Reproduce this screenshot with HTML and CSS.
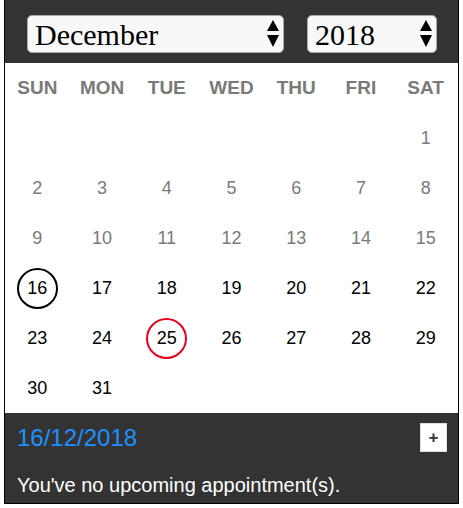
FILE: index.html
```html
<!DOCTYPE html>
<html>
<head>
<meta charset="utf-8">
<link rel="stylesheet" href="styles.css">
</head>
<body>
<div class="cal">
  <div class="cal-head">
    <div class="sel sel-month">
      <select class="sel-input"><option>December</option></select>
      <svg class="sel-arrows" width="12" height="27" viewBox="0 0 12 27"><polygon points="6,0 12,11 0,11" fill="#000"/><polygon points="0,15 12,15 6,27" fill="#000"/></svg>
    </div>
    <div class="sel sel-year">
      <select class="sel-input"><option>2018</option></select>
      <svg class="sel-arrows" width="12" height="27" viewBox="0 0 12 27"><polygon points="6,0 12,11 0,11" fill="#000"/><polygon points="0,15 12,15 6,27" fill="#000"/></svg>
    </div>
  </div>
  <div class="grid">
    <div class="wd">SUN</div><div class="wd">MON</div><div class="wd">TUE</div><div class="wd">WED</div><div class="wd">THU</div><div class="wd">FRI</div><div class="wd">SAT</div>
    <div class="d"></div><div class="d"></div><div class="d"></div><div class="d"></div><div class="d"></div><div class="d"></div><div class="d past">1</div>
    <div class="d past">2</div><div class="d past">3</div><div class="d past">4</div><div class="d past">5</div><div class="d past">6</div><div class="d past">7</div><div class="d past">8</div>
    <div class="d past">9</div><div class="d past">10</div><div class="d past">11</div><div class="d past">12</div><div class="d past">13</div><div class="d past">14</div><div class="d past">15</div>
    <div class="d"><span class="ring sel-ring">16</span></div><div class="d">17</div><div class="d">18</div><div class="d">19</div><div class="d">20</div><div class="d">21</div><div class="d">22</div>
    <div class="d">23</div><div class="d">24</div><div class="d"><span class="ring today-ring">25</span></div><div class="d">26</div><div class="d">27</div><div class="d">28</div><div class="d">29</div>
    <div class="d">30</div><div class="d">31</div><div class="d"></div><div class="d"></div><div class="d"></div><div class="d"></div><div class="d"></div>
  </div>
  <div class="foot">
    <div class="foot-top">
      <span class="foot-date">16/12/2018</span>
      <button class="add">+</button>
    </div>
    <div class="foot-msg">You've no upcoming appointment(s).</div>
  </div>
</div>
</body>
</html>
```
FILE: styles.css
```css
html, body { margin: 0; padding: 0; background: #fff; }
body { font-family: "Liberation Sans", Arial, sans-serif; }
.cal {
  width: 453px;
  margin-left: 4px;
  border: 1px solid #000;
  border-top: none;
  background: #fff;
}
.cal-head {
  background: #333;
  height: 63px;
  box-sizing: border-box;
  padding: 15px 0 0 22px;
  display: flex;
  gap: 23px;
}
.sel { position: relative; height: 38px; }
.sel-month { width: 257px; }
.sel-year { width: 130px; }
.sel-input {
  -webkit-appearance: none;
  appearance: none;
  width: 100%;
  height: 100%;
  box-sizing: border-box;
  border: 1px solid #aaa;
  border-radius: 5px;
  background: #f8f8f8;
  font-family: "Liberation Serif", "Times New Roman", serif;
  font-size: 30px;
  color: #000;
  padding: 0 0 0 7px;
  margin: 0;
  outline: none;
}
.sel-arrows { position: absolute; right: 5px; top: 5px; pointer-events: none; }
.grid {
  display: grid;
  grid-template-columns: repeat(7, 1fr);
  grid-auto-rows: 50px;
}
.wd, .d {
  display: flex;
  align-items: center;
  justify-content: center;
}
.wd { color: #7a7a7a; font-weight: bold; font-size: 19px; }
.d { color: #000; font-size: 18px; }
.d.past { color: #7a7a7a; }
.ring {
  width: 41px;
  height: 41px;
  box-sizing: border-box;
  border-radius: 50%;
  border: 2px solid #000;
  display: flex;
  align-items: center;
  justify-content: center;
}
.today-ring { border-color: #e8001c; }
.foot {
  background: #333;
  height: 90px;
  box-sizing: border-box;
  padding: 10px 11px 0 12px;
}
.foot-top {
  display: flex;
  align-items: center;
  justify-content: space-between;
  height: 29px;
}
.foot-date { color: #1e90ff; font-size: 24px; }
.add {
  width: 27px;
  height: 29px;
  border: 1px solid #ddd;
  background: #fff;
  color: #333;
  font-family: "Liberation Sans", Arial, sans-serif;
  font-weight: bold;
  font-size: 17px;
  padding: 0;
  margin: 0;
  line-height: 1;
}
.foot-msg {
  color: #fff;
  font-size: 20px;
  margin-top: 22px;
}
```
